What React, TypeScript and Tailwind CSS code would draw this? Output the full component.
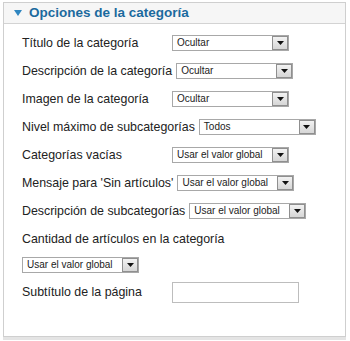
import React from "react";

function Sel({ value }: { value: string }) {
  return (
    <div className="relative flex h-[16px] w-[117px] shrink-0 items-center border border-[#a8a8a8] bg-white">
      <span className="pl-[4px] text-[10px] leading-none text-[#222]" style={{ fontFamily: "'Liberation Sans', Arial, sans-serif" }}>
        {value}
      </span>
      <div className="absolute right-0 top-0 flex h-[14px] w-[16px] items-center justify-center border border-[#8f8f8f] bg-gradient-to-b from-[#f2f2f2] to-[#d6d6d6]">
        <svg width="7" height="4" viewBox="0 0 7 4">
          <path d="M0 0 L7 0 L3.5 4 Z" fill="#111" />
        </svg>
      </div>
    </div>
  );
}

function Row({ label, value }: { label: string; value: string }) {
  return (
    <div className="flex h-[28px] items-center gap-[4px]">
      <span className="min-w-[146px] whitespace-nowrap">{label}</span>
      <Sel value={value} />
    </div>
  );
}

export default function App() {
  return (
    <div className="h-[341px] w-[350px] bg-white" style={{ fontFamily: "'Liberation Sans', Arial, sans-serif" }}>
      <div className="ml-[3px] pt-[2px]">
        <div className="h-[335px] w-[343px] border border-[#cfcfcf] bg-white">
          <div className="flex h-[21px] items-center border-b border-[#d3d3d3] bg-[#f6f6f6] pl-[10px]">
            <svg width="8" height="6" viewBox="0 0 8 6" className="mr-[7px]">
              <path d="M0 0 L8 0 L4 6 Z" fill="#2f86c0" />
            </svg>
            <span className="text-[13.5px] font-bold text-[#1b6a9e]">Opciones de la categoría</span>
          </div>
          <div className="pl-[18px] pt-[5px] text-[12.4px] text-[#222]">
            <Row label="Título de la categoría" value="Ocultar" />
            <Row label="Descripción de la categoría" value="Ocultar" />
            <Row label="Imagen de la categoría" value="Ocultar" />
            <Row label="Nivel máximo de subcategorías" value="Todos" />
            <Row label="Categorías vacías" value="Usar el valor global" />
            <Row label="Mensaje para 'Sin artículos'" value="Usar el valor global" />
            <Row label="Descripción de subcategorías" value="Usar el valor global" />
            <div className="flex h-[28px] items-center">Cantidad de artículos en la categoría</div>
            <div className="mt-[4px]">
              <Sel value="Usar el valor global" />
            </div>
            <div className="mt-[5px] flex h-[28px] items-center gap-[4px]">
              <span className="min-w-[146px] whitespace-nowrap">Subtítulo de la página</span>
              <div className="h-[21px] w-[127px] border border-[#bdbdbd] bg-white" />
            </div>
          </div>
        </div>
        <div className="h-[3px] w-[343px] bg-[#e4e4e4]" />
      </div>
    </div>
  );
}
